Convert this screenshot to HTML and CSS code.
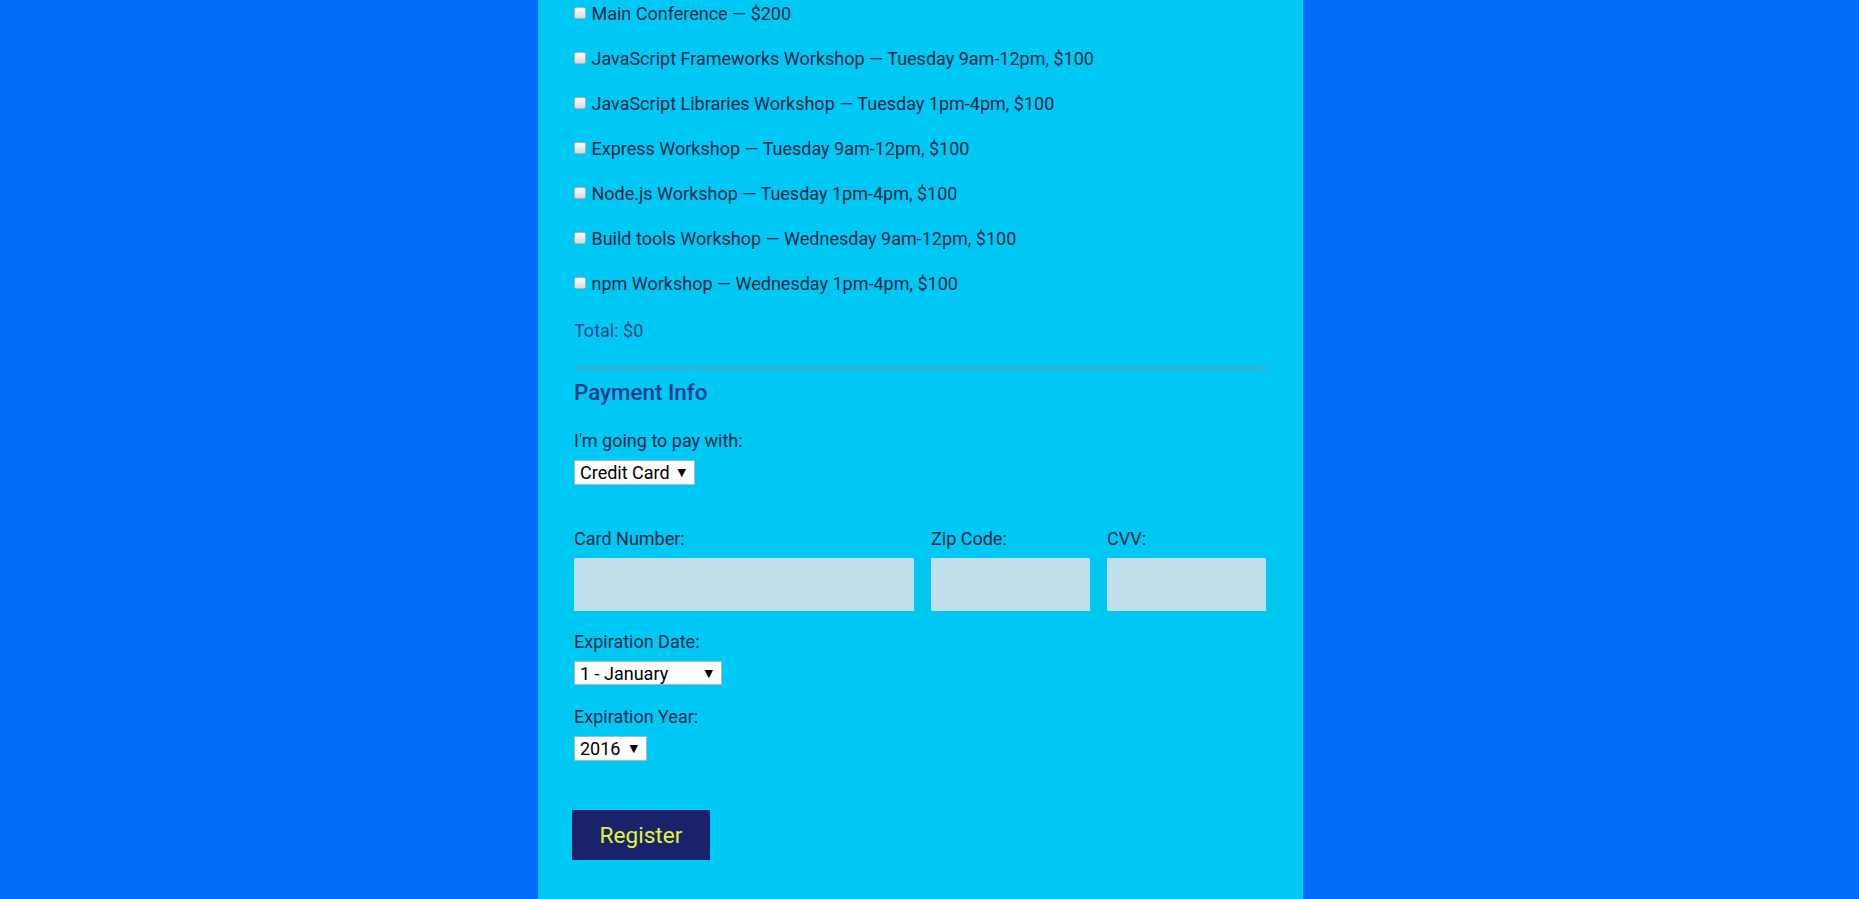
FILE: index.html
```html
<!DOCTYPE html>
<html lang="en">
<head>
<meta charset="utf-8">
<title>Register</title>
<link rel="stylesheet" href="styles.css">
</head>
<body>
<div class="page">
  <form class="panel">
    <fieldset class="activities">
      <label class="activity"><input type="checkbox" class="check"> Main Conference — $200</label>
      <label class="activity"><input type="checkbox" class="check"> JavaScript Frameworks Workshop — Tuesday 9am-12pm, $100</label>
      <label class="activity"><input type="checkbox" class="check"> JavaScript Libraries Workshop — Tuesday 1pm-4pm, $100</label>
      <label class="activity"><input type="checkbox" class="check"> Express Workshop — Tuesday 9am-12pm, $100</label>
      <label class="activity"><input type="checkbox" class="check"> Node.js Workshop — Tuesday 1pm-4pm, $100</label>
      <label class="activity"><input type="checkbox" class="check"> Build tools Workshop — Wednesday 9am-12pm, $100</label>
      <label class="activity"><input type="checkbox" class="check"> npm Workshop — Wednesday 1pm-4pm, $100</label>
      <p class="total">Total: $0</p>
    </fieldset>
    <hr class="rule">
    <fieldset class="payment">
      <h2 class="legend">Payment Info</h2>
      <label class="label">I'm going to pay with:</label>
      <div class="select sel-pay"><span>Credit Card</span><span class="arrow">▼</span></div>

      <div class="card-row">
        <div class="field field-cc">
          <label class="label">Card Number:</label>
          <input type="text" class="input">
        </div>
        <div class="field field-zip">
          <label class="label">Zip Code:</label>
          <input type="text" class="input">
        </div>
        <div class="field field-cvv">
          <label class="label">CVV:</label>
          <input type="text" class="input">
        </div>
      </div>

      <label class="label label-exp">Expiration Date:</label>
      <div class="select sel-month"><span>1 - January</span><span class="arrow">▼</span></div>
      <label class="label label-year">Expiration Year:</label>
      <div class="select sel-year"><span>2016</span><span class="arrow">▼</span></div>
    </fieldset>
    <button type="button" class="register">Register</button>
  </form>
</div>
</body>
</html>
```
FILE: styles.css
```css
html, body {
  margin: 0;
  padding: 0;
  height: 100%;
}
body {
  background: #006cf7;
  font-family: Roboto, "Liberation Sans", sans-serif;
  color: #0d2946;
  overflow: hidden;
}
.page {
  padding-right: 18px;
  height: 100%;
}
.panel {
  box-sizing: border-box;
  width: 765px;
  height: 100%;
  margin: 0 auto;
  background: #00c8f5;
  padding: 4px 36px 0 36px;
  display: flex;
  flex-direction: column;
}
fieldset {
  border: none;
  margin: 0;
  padding: 0;
  display: flex;
  flex-direction: column;
}
.activity {
  display: flex;
  align-items: flex-start;
  font-size: 18px;
  line-height: 20px;
  height: 20px;
  margin-bottom: 25px;
  white-space: pre;
}
.check {
  -webkit-appearance: none;
  appearance: none;
  box-sizing: border-box;
  width: 12px;
  height: 12px;
  margin: 3px 1px 0 0;
  border: 1px solid #a3b6bf;
  border-radius: 2px;
  background: linear-gradient(#fdfdfd, #d9d9d9);
  flex: none;
}
.total {
  margin: 2px 0 0 0;
  font-size: 18px;
  line-height: 20px;
  color: #1c4a86;
}
.rule {
  margin: 26px 0 0 0;
  border: none;
  height: 2px;
  background: #6b9db3;
}
.legend {
  margin: 10px 0 0 0;
  font-size: 22.4px;
  line-height: 26px;
  font-weight: 500;
  color: #133c8c;
}
.label {
  display: block;
  font-size: 18px;
  line-height: 20px;
  margin-top: 26px;
}
.select {
  box-sizing: border-box;
  margin-top: 9px;
  height: 25px;
  display: flex;
  align-items: center;
  justify-content: space-between;
  background: #fff;
  border: 1px solid #9fbccc;
  padding: 0 8px 0 5px;
  font-size: 18px;
  color: #000;
}
.arrow {
  font-size: 11px;
  font-family: "DejaVu Sans", sans-serif;
}
.sel-pay { width: 121px; }
.sel-month { width: 148px; height: 24px; }
.sel-year { width: 73px; }
.card-row {
  display: flex;
  gap: 17px;
  margin-top: 44px;
}
.card-row .label { margin-top: 0; }
.field {
  display: flex;
  flex-direction: column;
}
.field-cc { width: 340px; }
.field-zip { width: 159px; }
.field-cvv { width: 159px; }
.input {
  box-sizing: border-box;
  margin-top: 9px;
  height: 53px;
  width: 100%;
  border: none;
  background: #c0dfea;
}
.label-exp { margin-top: 21px; }
.label-year { margin-top: 22px; }
.register {
  align-self: flex-start;
  margin: 49px 0 0 -2px;
  width: 138px;
  height: 50px;
  border: none;
  background: #19226a;
  color: #e4f53a;
  font-family: Roboto, "Liberation Sans", sans-serif;
  font-size: 22.6px;
  padding: 0;
}
```
